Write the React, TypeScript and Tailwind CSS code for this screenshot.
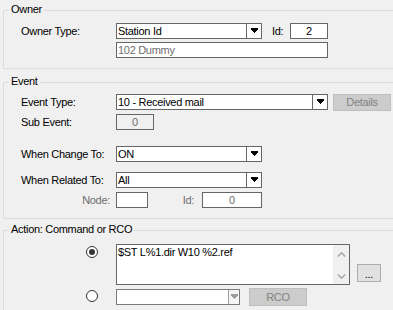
import React from "react";

function Arrow({ color = "#000" }: { color?: string }) {
  return (
    <svg width="7" height="6" viewBox="0 0 7 6" shapeRendering="crispEdges">
      <path d="M0 0h7v2h-1v1h-1v1h-1v1h-1v-1h-1v-1h-1v-1h-1z" fill={color} />
    </svg>
  );
}

function Chevron({ up }: { up?: boolean }) {
  return (
    <svg width="9" height="5" viewBox="0 0 9 5">
      <polyline
        points={up ? "0.8,4.5 4.5,0.8 8.2,4.5" : "0.8,0.5 4.5,4.2 8.2,0.5"}
        fill="none"
        stroke="#a6a6a6"
        strokeWidth="1.4"
      />
    </svg>
  );
}

function Group({
  title,
  className,
  children,
}: {
  title: string;
  className: string;
  children?: React.ReactNode;
}) {
  return (
    <div className={"relative w-[400px] border border-[#dcdcdc] " + className}>
      <span className="absolute left-[5px] top-[-8px] bg-[#f0f0f0] px-[2px]">{title}</span>
      {children}
    </div>
  );
}

function Label({ children, grey }: { children?: React.ReactNode; grey?: boolean }) {
  return (
    <div
      className={
        "flex h-[16px] w-[95px] shrink-0 items-center " +
        (grey ? "justify-end pr-[6px] text-[#6d6d6d]" : "")
      }
    >
      {children}
    </div>
  );
}

function Combo({ w, text }: { w: string; text: string }) {
  return (
    <div className={"flex h-[16px] shrink-0 border border-[#666666] bg-white " + w}>
      <div className="flex flex-1 items-center overflow-hidden px-[1px] whitespace-nowrap">{text}</div>
      <div className="flex w-[15px] items-center justify-center border-l border-[#666666]">
        <Arrow />
      </div>
    </div>
  );
}

function Box({
  w,
  children,
  center,
  grey,
  bg = "bg-white",
}: {
  w: string;
  children?: React.ReactNode;
  center?: boolean;
  grey?: boolean;
  bg?: string;
}) {
  return (
    <div
      className={
        "flex h-[16px] shrink-0 items-center border border-[#666666] px-[1px] " +
        bg +
        " " +
        w +
        (center ? " justify-center" : "") +
        (grey ? " text-[#6d6d6d]" : "")
      }
    >
      {children}
    </div>
  );
}

function Radio({ checked, className }: { checked?: boolean; className: string }) {
  return (
    <div
      className={
        "flex h-[12px] w-[12px] shrink-0 items-center justify-center rounded-full border border-[#333333] bg-white " +
        className
      }
    >
      {checked && <div className="h-[6px] w-[6px] rounded-full bg-[#333333]" />}
    </div>
  );
}

export default function App() {
  return (
    <div className="h-[310px] w-[393px] overflow-hidden bg-[#f0f0f0] pl-[3px] pt-[10px] font-['Liberation_Sans',Arial,sans-serif] text-[11px] leading-[13px] tracking-[-0.3px] text-black">
      <Group title="Owner" className="h-[59px] pt-[12px]">
        <div className="flex items-center pl-[17px]">
          <Label>Owner Type:</Label>
          <Combo w="w-[146px]" text="Station Id" />
          <span className="ml-[10px] w-[18px] shrink-0">Id:</span>
          <Box w="w-[38px]" center>
            2
          </Box>
        </div>
        <div className="mt-[3px] flex items-center pl-[17px]">
          <Label />
          <Box w="w-[212px]" grey>
            102 Dummy
          </Box>
        </div>
      </Group>

      <Group title="Event" className="mt-[13px] h-[137px] pt-[11px]">
        <div className="flex items-start pl-[17px]">
          <Label>Event Type:</Label>
          <Combo w="w-[212px]" text="10 - Received mail" />
          <div className="ml-[5px] flex h-[17px] w-[58px] shrink-0 items-center justify-center border border-[#bfbfbf] bg-[#cccccc] text-[#838383]">
            Details
          </div>
        </div>
        <div className="mt-[3px] flex items-center pl-[17px]">
          <Label>Sub Event:</Label>
          <Box w="w-[38px]" center grey bg="bg-[#f0f0f0]">
            0
          </Box>
        </div>
        <div className="mt-[16px] flex items-center pl-[17px]">
          <Label>When Change To:</Label>
          <Combo w="w-[146px]" text="ON" />
        </div>
        <div className="mt-[10px] flex items-center pl-[17px]">
          <Label>When Related To:</Label>
          <Combo w="w-[146px]" text="All" />
        </div>
        <div className="mt-[4px] flex items-center pl-[17px]">
          <Label grey>Node:</Label>
          <Box w="w-[32px]" />
          <span className="w-[54px] shrink-0 pr-[8px] text-right text-[#6d6d6d]">Id:</span>
          <Box w="w-[60px]" center grey>
            0
          </Box>
        </div>
      </Group>

      <Group title="Action: Command or RCO" className="mt-[11px] h-[100px] pt-[13px]">
        <div className="flex items-start">
          <div className="flex w-[112px] shrink-0">
            <Radio checked className="ml-[82px] mt-[2px]" />
          </div>
          <div className="flex h-[41px] w-[234px] shrink-0 border border-[#666666] bg-white">
            <div className="flex-1 whitespace-nowrap px-[1px] pt-[1px]">$ST L%1.dir W10 %2.ref</div>
            <div className="flex w-[16px] flex-col items-center justify-between bg-[#f0f0f0] pb-[5px] pt-[7px]">
              <Chevron up />
              <Chevron />
            </div>
          </div>
          <div className="ml-[7px] mt-[20px] flex h-[18px] w-[24px] shrink-0 items-center justify-center border border-[#adadad] bg-[#e1e1e1] pt-[2px]">
            ...
          </div>
        </div>
        <div className="mt-[3px] flex items-center">
          <div className="flex w-[112px] shrink-0 self-start">
            <Radio className="ml-[82px] mt-[2px]" />
          </div>
          <div className="flex h-[16px] w-[124px] shrink-0 border border-[#7a7a7a] bg-white">
            <div className="flex-1" />
            <div className="flex w-[11px] items-center justify-center border-l border-[#a0a0a0] bg-[#f4f4f4]">
              <Arrow color="#9a9a9a" />
            </div>
          </div>
          <div className="ml-[9px] flex h-[18px] w-[58px] shrink-0 items-center justify-center border border-[#bfbfbf] bg-[#cccccc] text-[#838383]">
            RCO
          </div>
        </div>
      </Group>
    </div>
  );
}
